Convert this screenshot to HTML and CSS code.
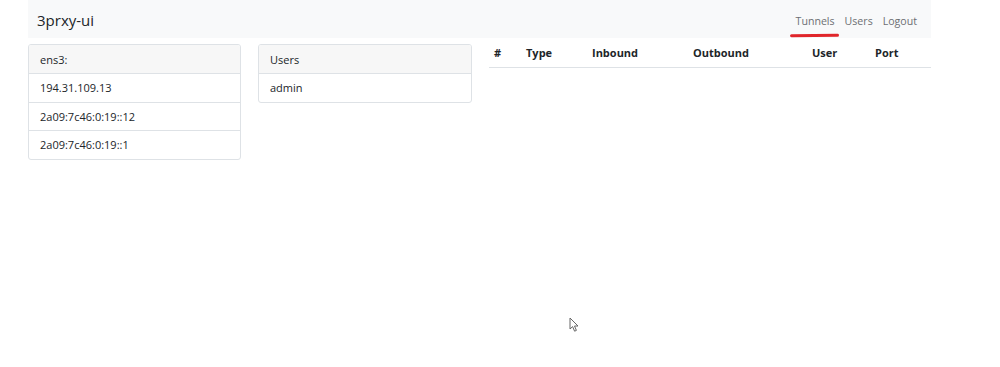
FILE: index.html
```html
<!DOCTYPE html>
<html lang="en">
<head>
    <meta charset="UTF-8">
    <title>3prxy-ui</title>
    <link rel="stylesheet" href="styles.css">
</head>
<body>
    <div class="container">
        <nav class="navbar">
            <span class="brand">3prxy-ui</span>
            <ul class="nav-links">
                <li><a href="#" class="active">Tunnels</a></li>
                <li><a href="#">Users</a></li>
                <li><a href="#">Logout</a></li>
            </ul>
        </nav>

        <div class="row">
            <div class="card">
                <div class="card-header">ens3:</div>
                <ul class="list">
                    <li>194.31.109.13</li>
                    <li>2a09:7c46:0:19::12</li>
                    <li>2a09:7c46:0:19::1</li>
                </ul>
            </div>

            <div class="card">
                <div class="card-header">Users</div>
                <ul class="list">
                    <li>admin</li>
                </ul>
            </div>

            <table class="tunnels">
                <thead>
                    <tr>
                        <th class="c-num">#</th>
                        <th class="c-type">Type</th>
                        <th class="c-in">Inbound</th>
                        <th class="c-out">Outbound</th>
                        <th class="c-user">User</th>
                        <th class="c-port">Port</th>
                    </tr>
                </thead>
                <tbody></tbody>
            </table>
        </div>
    </div>

    <!-- mouse pointer seen in the screenshot -->
    <svg class="pointer" width="12" height="16" viewBox="0 0 12 16">
        <path d="M1 1 L1 12 L3.6 9.6 L5.6 14.2 L7.4 13.4 L5.5 9 L9 9 Z" fill="#fff" stroke="#666" stroke-width="1"/>
    </svg>
</body>
</html>
```

FILE: styles.css
```css
body {
    margin: 0;
    font-family: 'Open Sans', 'Noto Sans', sans-serif;
    font-size: 11px;
    color: #212529;
    background: #fff;
    position: relative;
    height: 367px;
}

.container {
    width: 903px;
    margin-left: 28px;
}

/* Navbar */
.navbar {
    height: 38px;
    background-color: #f8f9fa;
    display: flex;
    align-items: center;
    justify-content: space-between;
    padding: 0 14px 0 9px;
}

.brand {
    font-size: 15px;
    color: #212529;
    padding-top: 1px;
}

.nav-links {
    list-style: none;
    margin: 0;
    padding: 0;
    display: flex;
    gap: 10px;
    padding-top: 2px;
}

.nav-links a {
    color: #6c6f73;
    text-decoration: none;
    font-size: 10.6px;
    position: relative;
}

.nav-links a.active::after {
    content: "";
    position: absolute;
    left: -6px;
    right: -4px;
    bottom: -9px;
    height: 3px;
    border-radius: 2px;
    background-color: #e0262b;
    transform: rotate(-0.6deg);
}

/* Content */
.row {
    display: grid;
    grid-template-columns: 213px 213px 442px;
    column-gap: 17px;
    align-items: start;
    margin-top: 6px;
}

.row > .card:nth-child(2) {
    margin-right: -1px;
}

.row > table {
    margin-left: 1px;
}

.card {
    border: 1px solid #dee2e6;
    border-radius: 3px;
    overflow: hidden;
}

.card-header {
    background-color: #f7f7f7;
    border-bottom: 1px solid #dee2e6;
    height: 28px;
    line-height: 29px;
    padding: 0 11px;
}

.list {
    list-style: none;
    margin: 0;
    padding: 0;
}

.list li {
    height: 28px;
    line-height: 28px;
    padding: 0 11px;
    border-bottom: 1px solid #dee2e6;
}

.list li:nth-child(2) {
    height: 27px;
}

.list li:last-child {
    border-bottom: none;
}

/* Tunnels table */
.tunnels {
    border-collapse: collapse;
    width: 442px;
    table-layout: fixed;
}

.tunnels th {
    font-weight: 700;
    text-align: left;
    height: 17px;
    padding: 0 0 6px 0;
    border-bottom: 1px solid #dee2e6;
    vertical-align: middle;
}

.c-num { width: 32px; padding-left: 5px !important; }
.c-type { width: 66px; }
.c-in { width: 101px; }
.c-out { width: 119px; }
.c-user { width: 63px; }
.c-port { width: auto; }

.pointer {
    position: absolute;
    left: 569px;
    top: 317px;
}
```
